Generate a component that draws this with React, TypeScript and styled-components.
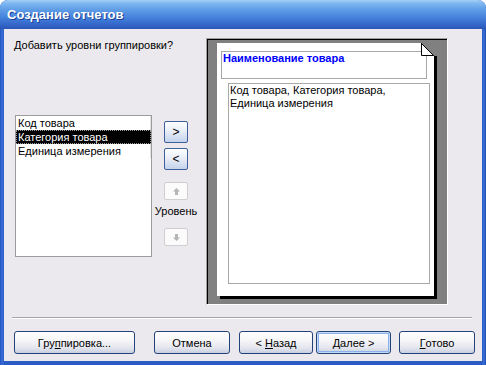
import styled, { createGlobalStyle, css } from "styled-components";

const GlobalStyle = createGlobalStyle`
  html, body {
    margin: 0;
    padding: 0;
    background: #ffffff;
  }
  body {
    font-family: "Liberation Sans", Arial, sans-serif;
    font-size: 11px;
    color: #000;
  }
`;

const fields = ["Код товара", "Категория товара", "Единица измерения"];

export default function App() {
  return (
    <>
      <GlobalStyle />
      <StyledWindow>
        <StyledTitleBar>Создание отчетов</StyledTitleBar>
        <StyledClient>
          <StyledBody>
            <StyledLeft>
              <StyledLabel>Добавить уровни группировки?</StyledLabel>
              <StyledListRow>
                <StyledList>
                  {fields.map((name, i) => (
                    <StyledItem key={name} $selected={i === 1}>
                      {name}
                    </StyledItem>
                  ))}
                </StyledList>
                <StyledButtonColumn>
                  <StyledArrowButton>&gt;</StyledArrowButton>
                  <StyledArrowButton $gap={5}>&lt;</StyledArrowButton>
                  <StyledLevelButton $gap={12}>
                    <ArrowIcon up />
                  </StyledLevelButton>
                  <StyledLevelLabel>Уровень</StyledLevelLabel>
                  <StyledLevelButton $gap={10}>
                    <ArrowIcon />
                  </StyledLevelButton>
                </StyledButtonColumn>
              </StyledListRow>
            </StyledLeft>
            <StyledPreview>
              <StyledPage>
                <StyledHeaderBox>Наименование товара</StyledHeaderBox>
                <StyledDetailBox>
                  Код товара, Категория товара,
                  <br />
                  Единица измерения
                </StyledDetailBox>
                <StyledFold width="17" height="13" viewBox="0 0 17 13">
                  <rect x="13" y="0" width="4" height="13" fill="#808080" />
                  <polygon points="0,0 13,0 13,13" fill="#808080" />
                  <polygon points="0.5,0.5 0.5,12.5 12.5,12.5" fill="#ffffff" />
                  <polyline
                    points="0.5,0 0.5,12.5 13,12.5"
                    fill="none"
                    stroke="#000"
                    strokeWidth="1"
                  />
                  <line x1="0.5" y1="0.5" x2="13" y2="13" stroke="#000" strokeWidth="1" />
                </StyledFold>
              </StyledPage>
            </StyledPreview>
          </StyledBody>
          <StyledSeparator />
          <StyledButtonRow>
            <StyledDialogButton $width={121}>
              Гру<u>п</u>пировка...
            </StyledDialogButton>
            <StyledDialogButton $width={76} $gap={19}>
              Отмена
            </StyledDialogButton>
            <StyledDialogButton $width={74} $gap={9}>
              {"<\u00a0"}
              <u>Н</u>азад
            </StyledDialogButton>
            <StyledDialogButton $width={75} $gap={3} $default>
              <u>Д</u>
              {"алее\u00a0>"}
            </StyledDialogButton>
            <StyledDialogButton $width={76} $gap={8}>
              <u>Г</u>отово
            </StyledDialogButton>
          </StyledButtonRow>
        </StyledClient>
      </StyledWindow>
    </>
  );
}

function ArrowIcon({ up = false }: { up?: boolean }) {
  return (
    <svg width="7" height="7" viewBox="0 0 7 7" style={up ? undefined : { transform: "rotate(180deg)" }}>
      <polygon points="3.5,0 7,3.5 5,3.5 5,7 2,7 2,3.5 0,3.5" fill="#b5b5b5" />
    </svg>
  );
}

const StyledWindow = styled.div`
  width: 486px;
  height: 365px;
  display: flex;
  flex-direction: column;
  background: linear-gradient(to right, #2150c0, #3a6fd8 2px, #2b5cc6 4px, #2b5cc6 482px, #3a6fd8 484px, #1e47b0);
  border-radius: 8px 8px 0 0;
  overflow: hidden;
`;

const StyledTitleBar = styled.div`
  height: 29px;
  flex: none;
  display: flex;
  align-items: center;
  padding-left: 7px;
  box-sizing: border-box;
  background: linear-gradient(
    to bottom,
    #a6cff7 0%,
    #7db6f0 12%,
    #5d9be6 35%,
    #4683dc 60%,
    #3569cc 82%,
    #2b56b8 100%
  );
  color: #ffffff;
  font-weight: bold;
  font-size: 13px;
  text-shadow: 1px 1px 0 #1a3f96;
`;

const StyledClient = styled.div`
  flex: 1;
  margin: 0 4px 4px 4px;
  background: #ebe9ed;
  display: flex;
  flex-direction: column;
`;

const StyledBody = styled.div`
  height: 288px;
  flex: none;
  box-sizing: border-box;
  padding: 9px 0 0 10px;
  display: flex;
  align-items: flex-start;
`;

const StyledLeft = styled.div`
  width: 186px;
  display: flex;
  flex-direction: column;
`;

const StyledLabel = styled.div`
  margin-top: 1px;
  line-height: 13px;
  white-space: nowrap;
`;

const StyledListRow = styled.div`
  margin-top: 63px;
  display: flex;
  align-items: flex-start;
`;

const StyledList = styled.div`
  margin-left: 1px;
  width: 137px;
  height: 142px;
  box-sizing: border-box;
  border: 1px solid #9c9c9c;
  background: #ffffff;
  display: flex;
  flex-direction: column;
`;

const StyledItem = styled.div<{ $selected?: boolean }>`
  height: 14px;
  line-height: 14px;
  padding-left: 2px;
  white-space: nowrap;
  box-shadow: inset -1px 0 0 #e2e2e2;
  ${({ $selected }) =>
    $selected &&
    css`
      background: #000000;
      color: #ffffff;
      outline: 1px dotted #9a9a9a;
      outline-offset: -1px;
      box-shadow: none;
    `}
`;

const StyledButtonColumn = styled.div`
  width: 48px;
  padding-top: 6px;
  display: flex;
  flex-direction: column;
  align-items: center;
`;

const StyledArrowButton = styled.div<{ $gap?: number }>`
  width: 24px;
  height: 22px;
  box-sizing: border-box;
  margin-top: ${({ $gap }) => $gap ?? 0}px;
  border: 1px solid #3d5f9a;
  border-radius: 2px;
  background: linear-gradient(to bottom, #fdfeff, #e9eef8 45%, #c3d2ea);
  display: flex;
  align-items: center;
  justify-content: center;
  font-size: 12px;
`;

const StyledLevelButton = styled.div<{ $gap?: number }>`
  width: 24px;
  height: 18px;
  box-sizing: border-box;
  margin-top: ${({ $gap }) => $gap ?? 0}px;
  border: 1px solid #cfcfcf;
  border-radius: 2px;
  background: #fbfbfb;
  display: flex;
  align-items: center;
  justify-content: center;
`;

const StyledLevelLabel = styled.div`
  margin-top: 4px;
  line-height: 14px;
  white-space: nowrap;
`;

const StyledPreview = styled.div`
  margin-left: 6px;
  width: 242px;
  height: 267px;
  box-sizing: border-box;
  border-top: 1px solid #a0a0a0;
  border-left: 1px solid #a0a0a0;
  border-right: 1px solid #ffffff;
  border-bottom: 1px solid #ffffff;
  box-shadow: inset 1px 1px 0 #000000;
  background: #808080;
  padding: 4px 0 0 10px;
`;

const StyledPage = styled.div`
  position: relative;
  width: 217px;
  height: 253px;
  background: #ffffff;
  box-shadow: 3px 3px 0 #000000;
  display: flex;
  flex-direction: column;
`;

const StyledHeaderBox = styled.div`
  margin: 8px 0 0 4px;
  width: 206px;
  height: 28px;
  box-sizing: border-box;
  border: 1px solid #a8a8a8;
  padding-left: 1px;
  line-height: 13px;
  color: #0000ff;
  font-weight: bold;
  white-space: nowrap;
`;

const StyledDetailBox = styled.div`
  margin: 4px 0 0 11px;
  width: 202px;
  height: 201px;
  box-sizing: border-box;
  border: 1px solid #a8a8a8;
  padding-left: 1px;
  line-height: 13px;
`;

const StyledFold = styled.svg`
  position: absolute;
  top: 0;
  right: -4px;
  display: block;
`;

const StyledSeparator = styled.div`
  margin: 0 10px 0 8px;
  height: 0;
  border-top: 1px solid #a6a6a6;
  border-bottom: 1px solid #ffffff;
`;

const StyledButtonRow = styled.div`
  padding: 12px 0 0 10px;
  display: flex;
  align-items: flex-start;
`;

const StyledDialogButton = styled.div<{ $width: number; $gap?: number; $default?: boolean }>`
  width: ${({ $width }) => $width}px;
  height: 23px;
  box-sizing: border-box;
  margin-left: ${({ $gap }) => $gap ?? 0}px;
  border: 1px solid #24427a;
  border-radius: 3px;
  background: linear-gradient(to bottom, #ffffff, #f6f6f8 40%, #e4e6ee 75%, #c9d0e0);
  display: flex;
  align-items: center;
  justify-content: center;
  white-space: nowrap;
  ${({ $default }) =>
    $default &&
    css`
      box-shadow: inset 0 0 0 1px #c4dbf7, inset 0 0 0 2px #8cb0ea;
    `}
`;
